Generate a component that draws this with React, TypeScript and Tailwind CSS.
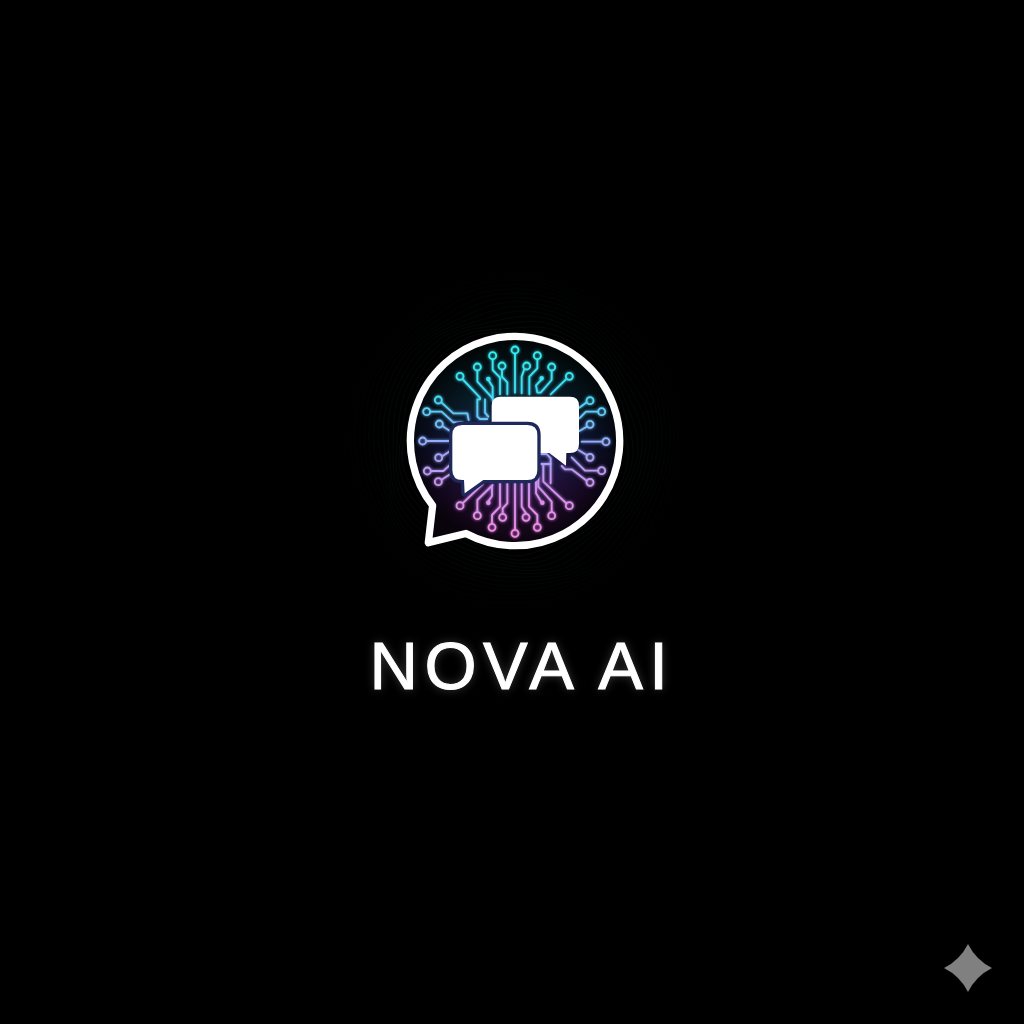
import React from 'react';

// all logo coordinates are in a 750x720 box, drawn at 250x240
type Trace = { d: string; x: number; y: number; r?: number };

const shell = 'M127.9 556.7A314 314 0 1 1 227.8 640.4L115 668Z';

const traces: Trace[] = [
  // top
  { d: 'M375 102V218', x: 375, y: 90 },
  { d: 'M308 119V150L330 173V223', x: 308, y: 107 },
  { d: 'M336 150V170L352 187V223', x: 336, y: 138 },
  { d: 'M262 153V185L308 235V242', x: 262, y: 141 },
  { d: 'M295 180L308 200V235', x: 295, y: 177, r: 4 },
  { d: 'M220 180L270 233V238H262V290L270 297H292', x: 210, y: 169 },
  { d: 'M402 150L395 170V220', x: 410, y: 138 },
  { d: 'M442 119V145L418 170V223', x: 442, y: 107 },
  { d: 'M485 153V180L452 218H442L438 196L455 178', x: 485, y: 141 },
  { d: 'M455 175', x: 455, y: 175, r: 4 },
  { d: 'M527 179L482 223', x: 538, y: 169 },
  { d: 'M285 238V278L295 290', x: 285, y: 238, r: 0 },
  // upper left
  { d: 'M155 248L190 280H232L236 300', x: 145, y: 240 },
  { d: 'M122 275H155L190 307H218', x: 110, y: 275 },
  { d: 'M157 318L180 333', x: 148, y: 312 },
  { d: 'M110 363H180', x: 98, y: 363 },
  // lower left
  { d: 'M158 408L185 390', x: 146, y: 413 },
  { d: 'M124 453H160L185 430', x: 112, y: 453 },
  { d: 'M157 478L185 460', x: 145, y: 485 },
  // bottom left
  { d: 'M220 548L278 492', x: 210, y: 557 },
  { d: 'M262 575V540L308 495', x: 262, y: 587 },
  { d: 'M295 544L306 528V498', x: 295, y: 548, r: 4 },
  { d: 'M306 610V585L330 560V488', x: 306, y: 622 },
  { d: 'M338 580V565L352 550V488', x: 338, y: 592 },
  { d: 'M375 628V488', x: 375, y: 640 },
  // bottom right
  { d: 'M408 580L395 560V488', x: 408, y: 592 },
  { d: 'M442 610V585L417 560V485', x: 442, y: 622 },
  { d: 'M452 543L438 520V475', x: 457, y: 548, r: 4 },
  { d: 'M485 575V545L445 500V470', x: 485, y: 587 },
  { d: 'M528 549L460 485V435', x: 538, y: 557 },
  { d: 'M450 402H470L482 415V490', x: 482, y: 490, r: 0 },
  { d: 'M450 432H482', x: 450, y: 432, r: 0 },
  // lower right
  { d: 'M515 438L525 448H545L590 482', x: 600, y: 487 },
  { d: 'M623 452H585L545 412', x: 635, y: 452 },
  { d: 'M590 405L565 390', x: 600, y: 412 },
  { d: 'M636 365H575', x: 648, y: 365 },
  // upper right
  { d: 'M590 247L568 263', x: 600, y: 242 },
  { d: 'M623 275H588L568 295', x: 635, y: 275 },
  { d: 'M590 320L568 333', x: 600, y: 313 },
];

// faint wavy contour lines round the logo
function contour(radius: number, phase: number) {
  const pts: string[] = [];
  for (let i = 0; i <= 90; i++) {
    const a = (i / 90) * Math.PI * 2;
    const r = radius + Math.sin(a * 5 + phase) * 7 + Math.sin(a * 9 + phase * 2) * 3;
    pts.push(`${(375 + Math.cos(a) * r).toFixed(1)} ${(363 + Math.sin(a) * r).toFixed(1)}`);
  }
  return 'M' + pts.join('L') + 'Z';
}

function Logo() {
  const rings = Array.from({ length: 14 }, (_, i) => 335 + i * 13);
  return (
    <svg width="250" height="240" viewBox="0 0 750 720" fill="none" className="block shrink-0 overflow-visible">
      <defs>
        <linearGradient id="trace" gradientUnits="userSpaceOnUse" x1="0" y1="80" x2="0" y2="650">
          <stop offset="0" stopColor="#30f0f0" />
          <stop offset="0.25" stopColor="#40dcf4" />
          <stop offset="0.5" stopColor="#92aefc" />
          <stop offset="0.72" stopColor="#cc94f0" />
          <stop offset="1" stopColor="#f888e8" />
        </linearGradient>
        <linearGradient id="disc" gradientUnits="userSpaceOnUse" x1="0" y1="50" x2="0" y2="680">
          <stop offset="0" stopColor="#04181c" />
          <stop offset="0.3" stopColor="#0b2230" />
          <stop offset="0.5" stopColor="#141c48" />
          <stop offset="0.78" stopColor="#2c1040" />
          <stop offset="1" stopColor="#30103a" />
        </linearGradient>
        <radialGradient id="edge" gradientUnits="userSpaceOnUse" cx="375" cy="363" r="314">
          <stop offset="0.45" stopColor="#000" stopOpacity="0" />
          <stop offset="1" stopColor="#000" stopOpacity="0.8" />
        </radialGradient>
        <radialGradient id="fade" gradientUnits="userSpaceOnUse" cx="375" cy="363" r="520">
          <stop offset="0.6" stopColor="#7fd0e0" stopOpacity="0.1" />
          <stop offset="1" stopColor="#7fd0e0" stopOpacity="0" />
        </radialGradient>
        <filter id="glow" x="-10%" y="-10%" width="120%" height="120%">
          <feGaussianBlur stdDeviation="4" result="b" />
          <feMerge>
            <feMergeNode in="b" />
            <feMergeNode in="SourceGraphic" />
          </feMerge>
        </filter>
      </defs>

      {rings.map((r, i) => (
        <path key={r} d={contour(r, i * 0.35)} stroke="url(#fade)" strokeWidth="1.5" />
      ))}

      <path d={shell} fill="url(#disc)" />
      <path d={shell} fill="url(#edge)" />

      <g stroke="url(#trace)" strokeWidth="5.5" strokeLinecap="round" strokeLinejoin="round" filter="url(#glow)">
        {traces.map((t, i) => (
          <g key={i}>
            <path d={t.d} />
            {t.r !== 0 && <circle cx={t.x} cy={t.y} r={t.r ?? 10.5} fill={t.r ? 'url(#trace)' : 'none'} />}
          </g>
        ))}
      </g>

      <path d={shell} stroke="#fff" strokeWidth="22" strokeLinejoin="round" />

      {/* back bubble */}
      <path
        d="M332 230H540Q567 230 567 257V372Q567 399 540 399H529L528 437L478 399H332Q305 399 305 372V257Q305 230 332 230Z"
        fill="#fff"
      />
      {/* front bubble with its navy outline */}
      <path
        d="M217 315H412Q442 315 442 345V450Q442 480 412 480H280L224 520L222 480H217Q187 480 187 450V345Q187 315 217 315Z"
        fill="#fff"
        stroke="#1f2858"
        strokeWidth="20"
        strokeLinejoin="round"
        paintOrder="stroke"
      />
    </svg>
  );
}

export default function App() {
  return (
    <div className="relative min-h-screen overflow-hidden bg-black flex flex-col items-center pt-[320px] pl-[6px]">
      <Logo />
      <h1 className="mt-[66px] ml-[14px] font-['Liberation_Sans',Arial,sans-serif] text-[67px] leading-[80px] font-normal tracking-[6.5px] text-white whitespace-nowrap [-webkit-text-stroke:1px_white] [text-shadow:0_0_10px_rgba(255,255,255,0.25)]">
        NOVA AI
      </h1>
      <svg width="48" height="48" viewBox="-24 -24 48 48" className="absolute right-8 bottom-8">
        <path d="M0 -24Q8 -8 24 0Q8 8 0 24Q-8 8 -24 0Q-8 -8 0 -24Z" fill="#808080" />
      </svg>
    </div>
  );
}
